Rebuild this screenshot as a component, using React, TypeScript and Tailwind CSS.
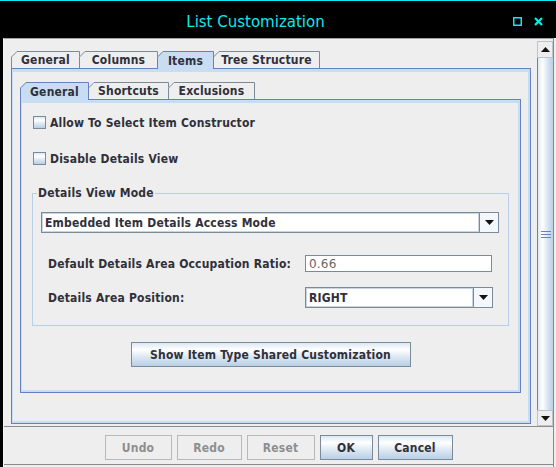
import clsx from "clsx";

const grad = "bg-[linear-gradient(to_bottom,#dde8f3,#ffffff_30%,#dde8f3_60%,#b8cfe5)]";

type TabDef = { label: string; w: number; selected?: boolean };

function Tab({ label, w, selected, first }: TabDef & { first?: boolean }) {
    const h = selected ? 18 : 17;
    const stroke = selected ? "#6382bf" : "#7a8a99";
    return (
        <div
            className={clsx(
                "relative flex items-center justify-center pt-[1px] self-start",
                selected ? "z-10 h-[18px] -mb-px" : "h-[17px]",
                !first && "-ml-px"
            )}
            style={{ width: w }}
        >
            <svg className="absolute inset-0" width={w} height={h}>
                <path d={`M0 ${h} V6 L6 0 H${w} V${h} Z`} fill={selected ? "#c8ddf2" : "#eeeeee"} />
                <path
                    d={`M0.5 ${h} V6 L6 0.5 H${w - 0.5} V${h}`}
                    fill="none"
                    stroke={stroke}
                />
            </svg>
            <span className="relative">{label}</span>
        </div>
    );
}

function TabPane({ tabs, children, className }: { tabs: TabDef[]; children: React.ReactNode; className?: string }) {
    return (
        <div className={clsx("flex flex-col", className)}>
            <div className="flex h-[17px] items-start">
                {tabs.map((t, i) => (
                    <Tab key={t.label} {...t} first={i === 0} />
                ))}
            </div>
            <div className="flex-1 flex border border-[#6382bf]">
                <div className="flex-1 flex flex-col border-t-[3px] border-l border-r-2 border-b-2 border-[#c8ddf2] bg-[#eeeeee]">
                    {children}
                </div>
            </div>
        </div>
    );
}

function CheckBox({ label }: { label: string }) {
    return (
        <div className="flex items-center gap-[4px] h-[13px] ml-px">
            <span className={clsx("w-[13px] h-[13px] border border-[#7a8a99]", grad)} />
            <span>{label}</span>
        </div>
    );
}

function Arrow() {
    return (
        <svg width="9" height="5" viewBox="0 0 9 5">
            <path d="M0 0H9L4.5 5Z" fill="#111" />
        </svg>
    );
}

function Combo({ value, className }: { value: string; className?: string }) {
    return (
        <div className={clsx("flex h-[21px] border border-[#7a8a99] bg-white", className)}>
            <div className="flex-1 flex items-center pl-[2px] border border-[#c8d4e0]">{value}</div>
            <div className="w-[19px] border-l border-[#7a8a99] bg-[#f4f7fb] flex items-center justify-center">
                <Arrow />
            </div>
        </div>
    );
}

function Btn({ label, w, disabled }: { label: string; w: string; disabled?: boolean }) {
    return (
        <div
            className={clsx(
                "h-[25px] flex items-center justify-center border",
                w,
                disabled ? "border-[#b8b8b8] bg-[#eeeeee] text-[#8e8e8e]" : clsx("border-[#7a8a99]", grad)
            )}
        >
            {label}
        </div>
    );
}

export default function App() {
    return (
        <div className="w-[556px] h-[467px] bg-black flex flex-col overflow-hidden font-['DejaVu_Sans_Condensed','DejaVu_Sans',sans-serif] text-[12px] tracking-[0.2px] font-bold text-[#30303a] leading-[14px]">
            <div className="h-px bg-[#0ee8f0]" />
            {/* Title bar */}
            <div className="h-[37px] flex items-center">
                <div className="flex-1 text-center pt-[4px] font-['DejaVu_Sans',sans-serif] font-normal tracking-normal text-[15px] text-[#0ee8f0] leading-[18px]">
                    List Customization
                </div>
                <div className="w-[45px] flex items-center gap-[12px] pl-[2px] pt-[3px]">
                    <svg width="9" height="9" viewBox="0 0 9 9">
                        <rect x="0.75" y="0.75" width="7.5" height="7.5" fill="none" stroke="#0ee8f0" strokeWidth="1.5" />
                    </svg>
                    <svg width="9" height="9" viewBox="0 0 9 9">
                        <path d="M1 1L8 8M8 1L1 8" stroke="#0ee8f0" strokeWidth="2.2" />
                    </svg>
                </div>
            </div>

            <div className="flex-1 flex">
                <div className="w-[3px]" />
                <div className="flex-1 flex flex-col bg-[#eeeeee] border-t border-l border-r border-t-[#a0a0a0] border-l-[#f4f4f4] border-r-[#8a8a8a]">
                    <div className="h-[387px] flex">
                        <TabPane
                            className="flex-1 pl-[7px] pr-[6px] pt-[12px] pb-[2px]"
                            tabs={[
                                { label: "General", w: 69 },
                                { label: "Columns", w: 79 },
                                { label: "Items", w: 57, selected: true },
                                { label: "Tree Structure", w: 107 },
                            ]}
                        >
                            <TabPane
                                className="flex-1 pt-[10px] pl-[7px] pr-[7px] pb-[28px]"
                                tabs={[
                                    { label: "General", w: 69, selected: true },
                                    { label: "Shortcuts", w: 81 },
                                    { label: "Exclusions", w: 87 },
                                ]}
                            >
                                <div className="flex-1 flex flex-col pl-[10px] pr-[9px] pt-[13px]">
                                    <CheckBox label="Allow To Select Item Constructor" />
                                    <div className="h-[23px]" />
                                    <CheckBox label="Disable Details View" />
                                    <fieldset className="mt-[21px] border border-[#b8cfe5] pb-[17px]">
                                        <legend className="ml-[4px] px-px">Details View Mode</legend>
                                        <div className="pt-[12px] flex flex-col">
                                            <Combo value="Embedded Item Details Access Mode" className="ml-[8px] w-[458px]" />
                                            <div className="mt-[22px] ml-[15px] grid grid-cols-[257px_188px] items-center gap-y-[15px]">
                                                <span>Default Details Area Occupation Ratio:</span>
                                                <div className="w-[187px] h-[17px] border border-[#7a8a99] bg-white flex items-center pl-[3px] font-normal text-[#666666] font-['DejaVu_Sans',sans-serif]">
                                                    0.66
                                                </div>
                                                <span>Details Area Position:</span>
                                                <Combo value="RIGHT" className="w-[188px]" />
                                            </div>
                                        </div>
                                    </fieldset>
                                    <div className="mt-[16px] flex justify-center">
                                        <Btn label="Show Item Type Shared Customization" w="w-[280px]" />
                                    </div>
                                </div>
                            </TabPane>
                        </TabPane>

                        {/* Scrollbar */}
                        <div className="w-[16px] flex flex-col pt-[2px]">
                            <div className="h-[17px] border border-[#b8c4d0] bg-[#eeeeee] flex items-center justify-center">
                                <svg width="9" height="5" viewBox="0 0 9 5">
                                    <path d="M0 5H9L4.5 0Z" fill="#111" />
                                </svg>
                            </div>
                            <div className="flex-1 flex items-center justify-center border-l border-[#6382bf] bg-[linear-gradient(to_right,#dde8f3,#ffffff_30%,#dde8f3_60%,#b8cfe5)]">
                                <svg width="10" height="7" viewBox="0 0 10 7">
                                    <path d="M0 0.5H10M0 3.5H10M0 6.5H10" stroke="#6382bf" />
                                </svg>
                            </div>
                            <div className="h-[16px] border border-[#b8c4d0] bg-[#eeeeee] flex items-center justify-center">
                                <Arrow />
                            </div>
                        </div>
                    </div>
                    <div className="h-px bg-[#8c8c8c]" />
                    {/* Bottom buttons */}
                    <div className="h-[38px] pt-[4px] flex items-center justify-center gap-[5px] border-b border-[#8a8a8a]">
                        <Btn label="Undo" w="w-[67px]" disabled />
                        <Btn label="Redo" w="w-[65px]" disabled />
                        <Btn label="Reset" w="w-[68px]" disabled />
                        <Btn label="OK" w="w-[53px]" />
                        <Btn label="Cancel" w="w-[75px]" />
                    </div>
                </div>
                <div className="w-[2px] bg-[#eeeeee]" />
            </div>
        </div>
    );
}
